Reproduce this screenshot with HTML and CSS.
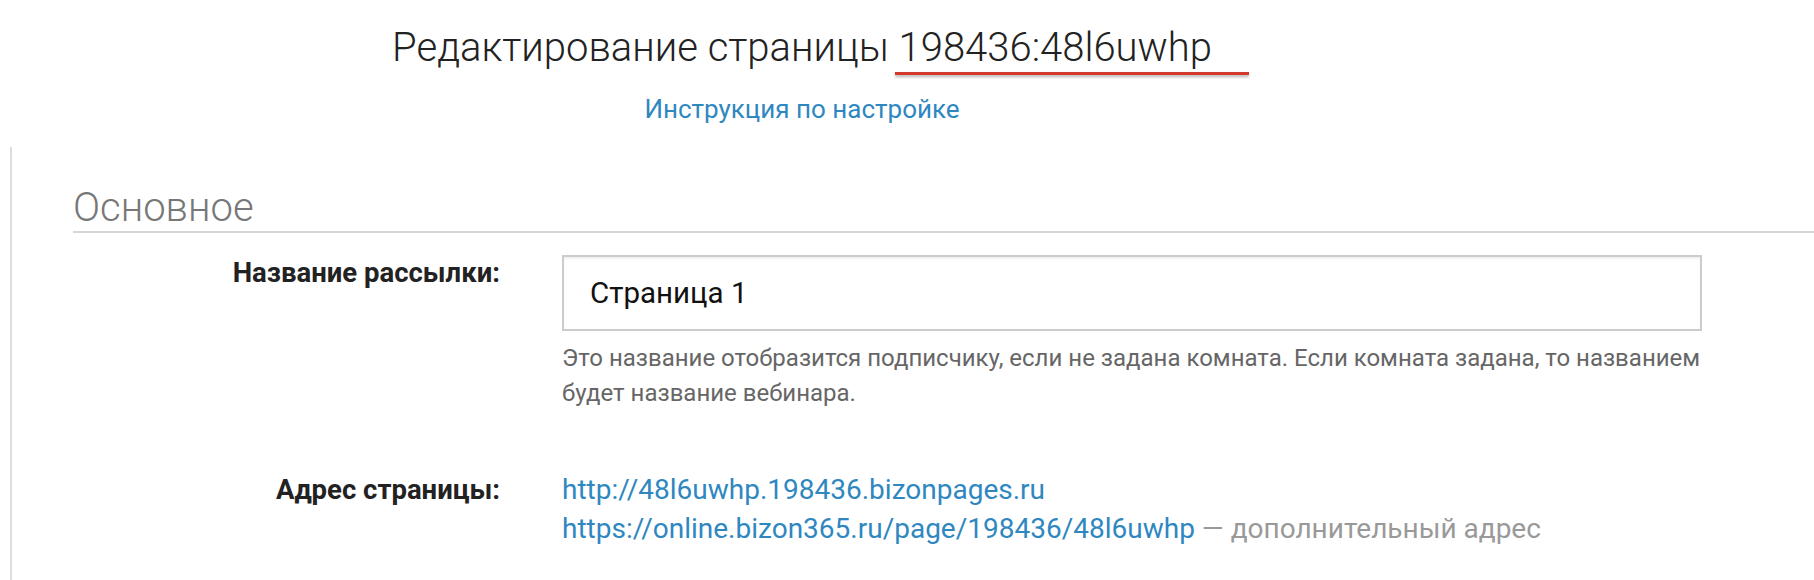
FILE: index.html
```html
<!DOCTYPE html>
<html lang="ru">
<head>
    <meta charset="UTF-8">
    <meta name="viewport" content="width=device-width, initial-scale=1.0">
    <title>Редактирование страницы</title>
    <link rel="stylesheet" href="styles.css">
</head>
<body>
    <div class="page">
        <header class="page-head">
            <h1 class="page-title">Редактирование страницы <span class="page-id">198436:48l6uwhp</span></h1>
            <a class="help-link" href="#">Инструкция по настройке</a>
        </header>

        <div class="editor">
            <section class="section">
                <h2 class="section-title">Основное</h2>

                <div class="form-row">
                    <label class="form-label" for="pageName">Название рассылки:</label>
                    <div class="form-field">
                        <input class="text-input" id="pageName" type="text" value="Страница 1">
                        <p class="hint">Это название отобразится подписчику, если не задана комната. Если комната задана, то названием будет название вебинара.</p>
                    </div>
                </div>

                <div class="form-row form-row-links">
                    <div class="form-label">Адрес страницы:</div>
                    <div class="form-field links">
                        <a href="#">http://48l6uwhp.198436.bizonpages.ru</a>
                        <div><a href="#">https://online.bizon365.ru/page/198436/48l6uwhp</a> <span class="muted">— дополнительный адрес</span></div>
                    </div>
                </div>
            </section>
        </div>
    </div>
</body>
</html>
```

FILE: styles.css
```css
body {
    margin: 0;
    font-family: Roboto, "Liberation Sans", sans-serif;
    color: #222;
    background-color: #fff;
}

a {
    color: #2f87bf;
    text-decoration: none;
}

.page-head {
    width: 1604px;
    padding-top: 23px;
    text-align: center;
}

.page-title {
    margin: 0;
    font-size: 40px;
    font-weight: 300;
    line-height: 50px;
    color: #222;
}

.page-id {
    position: relative;
    display: inline-block;
}

/* red marker under the page id */
.page-id::after {
    content: "";
    position: absolute;
    left: -4px;
    right: -37px;
    bottom: -2px;
    height: 3px;
    background-color: #d0392b;
    box-shadow: 0 2px 3px rgba(0, 0, 0, 0.3);
}

.help-link {
    display: inline-block;
    margin-top: 21px;
    font-size: 26px;
    line-height: 30px;
}

.editor {
    margin-top: 23px;
    margin-left: 10px;
    padding-top: 38px;
    border-left: 2px solid #ddd;
    min-height: 420px;
}

.section-title {
    margin: 0 0 0 61px;
    font-size: 40px;
    font-weight: 300;
    line-height: 46px;
    color: #777;
    border-bottom: 2px solid #d6d6d6;
}

.form-row {
    display: flex;
    gap: 62px;
    margin-top: 22px;
}

.form-row-links {
    margin-top: 59px;
}

.form-label {
    width: 488px;
    flex-shrink: 0;
    padding-top: 3px;
    text-align: right;
    font-size: 27.5px;
    font-weight: 700;
    line-height: 30px;
    color: #222;
}

.form-row-links .form-label {
    padding-top: 5px;
}

.form-field {
    width: 1140px;
}

.text-input {
    box-sizing: border-box;
    width: 100%;
    height: 76px;
    padding: 0 26px;
    border: 2px solid #ccc;
    box-shadow: inset 0 2px 2px rgba(0, 0, 0, 0.06);
    font-family: inherit;
    font-size: 29.5px;
    color: #111;
    outline: none;
}

.hint {
    margin: 10px -12px 0 0;
    font-size: 24px;
    line-height: 35px;
    color: #666;
}

.links {
    font-size: 28px;
    line-height: 39px;
}

.muted {
    color: #999;
}
```
